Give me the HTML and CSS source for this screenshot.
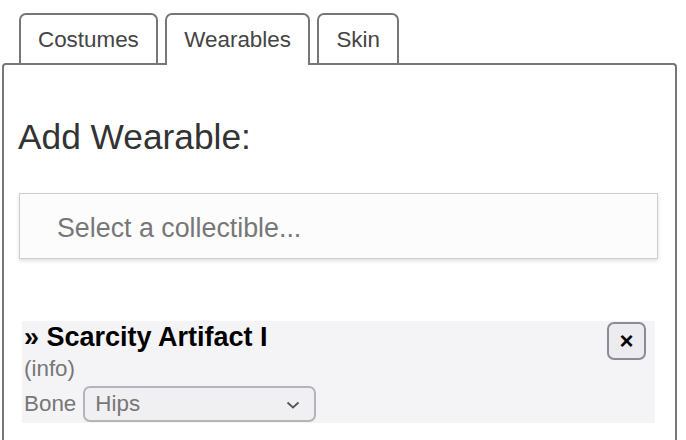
FILE: index.html
```html
<!DOCTYPE html>
<html>
<head>
<meta charset="utf-8">
<link rel="stylesheet" href="styles.css">
</head>
<body>
<div class="tabs">
  <div class="tab">Costumes</div>
  <div class="tab active">Wearables</div>
  <div class="tab">Skin</div>
</div>
<div class="panel">
  <h2 class="heading">Add Wearable:</h2>
  <div class="picker">Select a collectible...</div>
  <div class="item">
    <div class="item-title">» Scarcity Artifact I</div>
    <div class="item-info">(info)</div>
    <div class="bone-row">
      <span class="bone-label">Bone</span>
      <div class="bone-select">
        <span>Hips</span>
        <svg class="chev" width="14" height="8" viewBox="0 0 14 8"><path d="M1.5 1.5 L7 6.5 L12.5 1.5" fill="none" stroke="#555" stroke-width="1.8"/></svg>
      </div>
    </div>
    <button class="remove">×</button>
  </div>
</div>
</body>
</html>
```
FILE: styles.css
```css
html, body {
  margin: 0;
  padding: 0;
  background: #ffffff;
  font-family: "Liberation Sans", Arial, sans-serif;
  overflow: hidden;
}
.tabs {
  display: flex;
  gap: 7.5px;
  padding-left: 19px;
  margin-top: 13px;
  margin-bottom: -2px;
  align-items: flex-end;
}
.tab {
  font-size: 22.4px;
  line-height: 26px;
  color: #444;
  padding: 12px 17px 12px;
  border: 2px solid #777;
  border-bottom: none;
  border-radius: 7px 7px 0 0;
  background: transparent;
}
.tab.active {
  background: #ffffff;
}
.panel {
  margin-left: 2px;
  height: 420px;
  border: 2px solid #777;
  border-bottom: none;
  border-radius: 4px 4px 0 0;
  padding: 0 17px 0 15px;
  box-sizing: border-box;
  width: 675px;
}
.heading {
  margin: 52px 0 0 -1px;
  font-size: 35.3px;
  line-height: 40px;
  font-weight: normal;
  color: #333;
}
.picker {
  margin-top: 36px;
  height: 66px;
  box-sizing: border-box;
  border: 1.5px solid #cdcdcd;
  background: #fcfcfc;
  box-shadow: 0 2px 4px rgba(0,0,0,0.13);
  display: flex;
  align-items: center;
  padding: 5px 0 0 37px;
  font-size: 26.8px;
  color: #777;
}
.item {
  position: relative;
  margin: 62px 3px 0;
  background: #f4f4f6;
  padding: 1px 0 1px 2px;
}
.item-title {
  font-size: 27px;
  line-height: 30px;
  font-weight: bold;
  color: #000;
}
.item-info {
  font-size: 22.4px;
  line-height: 30px;
  color: #777;
  padding-top: 2px;
}
.bone-row {
  display: flex;
  align-items: center;
  margin-top: 2px;
}
.bone-label {
  font-size: 22.4px;
  color: #777;
  margin-right: 7px;
}
.bone-select {
  width: 233px;
  height: 36px;
  box-sizing: border-box;
  border: 2px solid #b4b4ba;
  border-radius: 7px;
  background: #f0f0f3;
  display: flex;
  align-items: center;
  justify-content: space-between;
  padding: 0 14px 0 10px;
  font-size: 22.4px;
  color: #777;
}
.chev {
  display: block;
  margin-top: 2px;
}
.remove {
  position: absolute;
  top: 1px;
  right: 9px;
  width: 39px;
  height: 38px;
  box-sizing: border-box;
  border: 2px solid #8b8b96;
  border-radius: 7px;
  background: #ebebf0;
  font-family: "Liberation Sans", Arial, sans-serif;
  font-size: 24px;
  font-weight: bold;
  color: #000;
  padding: 0;
  line-height: 30px;
}
```
